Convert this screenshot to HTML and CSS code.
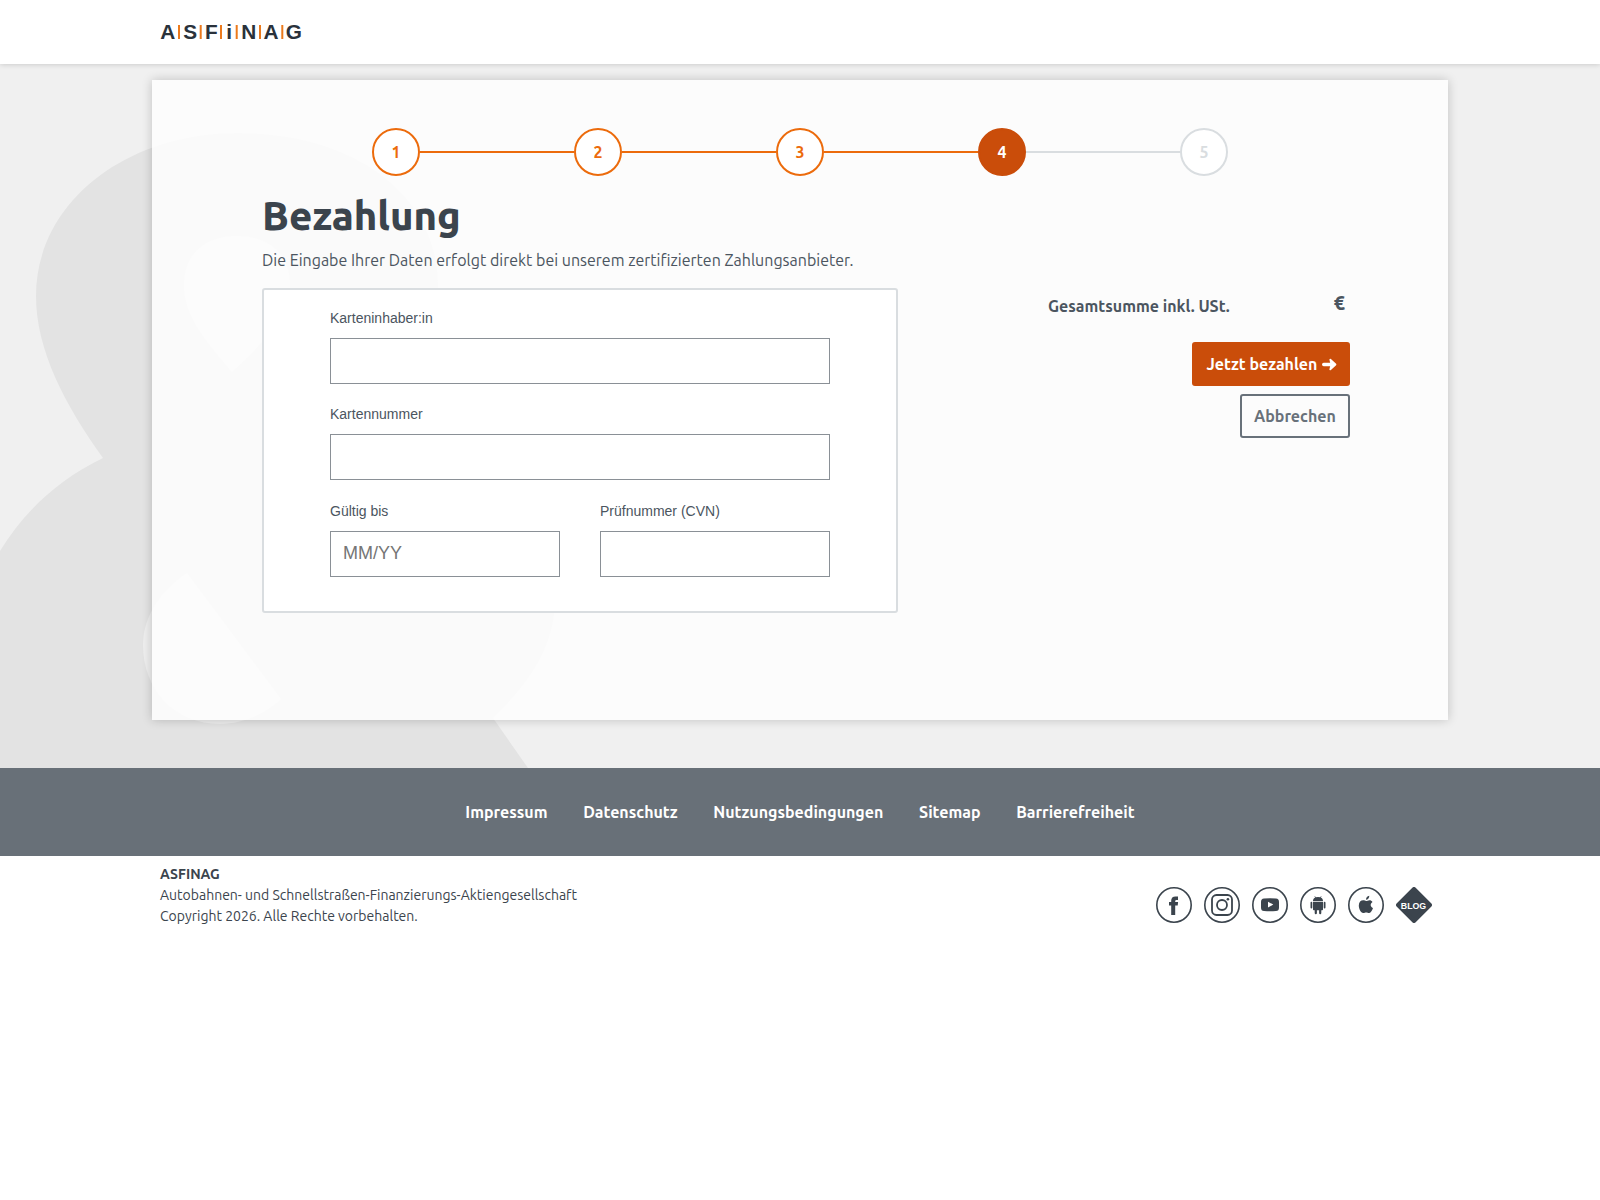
FILE: index.html
```
<!DOCTYPE html>
<html lang="de">
<head>
  <meta charset="UTF-8" />
  <meta name="viewport" content="width=device-width, initial-scale=1.0" />
  <title>ASFINAG - Bezahlung</title>
  <link rel="stylesheet" href="styles.css">
</head>
<body>
  <header class="header">
    <svg class="logo" width="144" height="24" viewBox="0 0 144 24" role="img" aria-label="ASFINAG">
      <text transform="scale(1.04 1)" y="19" x="0.300 22.400 43.400 63.700 78.100 99.600 120.800">ASFiNAG</text>
      <path d="M19 5v14M40.700 5v14M61 5v14M76.700 5v14M100 5v14M122.300 5v14" />
    </svg>
  </header>

  <div class="stage">
    <svg class="backdrop" width="620" height="704" viewBox="0 64 620 704" aria-hidden="true">
      <path class="shape" d="M103 458C65 405 36 350 36 296C36 203 125 133 238 133C355 133 438 195 438 285C438 350 405 400 355 440C480 470 555 520 555 600C555 645 530 683 493 718L528 768H0V551C22 515 55 481 103 458Z" />
      <path class="hole" d="M232 372C205 340 184 316 184 285C184 254 205 236 237 236C269 236 290 254 290 285C290 316 266 340 232 372Z" />
      <path class="hole" d="M187 573C162 590 143 615 143 645C143 690 175 724 220 724C243 724 265 714 281 699Z" />
    </svg>

    <main class="card">
      <ol class="steps">
        <li class="step done">1</li>
        <li class="step done">2</li>
        <li class="step done">3</li>
        <li class="step active">4</li>
        <li class="step">5</li>
      </ol>

      <h1>Bezahlung</h1>
      <p class="intro">Die Eingabe Ihrer Daten erfolgt direkt bei unserem zertifizierten Zahlungsanbieter.</p>

      <div class="payment">
        <form class="card-form">
          <div class="field wide">
            <label for="holder">Karteninhaber:in</label>
            <input id="holder" type="text">
          </div>
          <div class="field wide">
            <label for="number">Kartennummer</label>
            <input id="number" type="text">
          </div>
          <div class="field">
            <label for="expiry">Gültig bis</label>
            <input id="expiry" type="text" placeholder="MM/YY">
          </div>
          <div class="field">
            <label for="cvn">Prüfnummer (CVN)</label>
            <input id="cvn" type="text">
          </div>
        </form>

        <aside class="summary">
          <div class="total">
            <span class="total-label">Gesamtsumme inkl. USt.</span>
            <span class="total-value">€</span>
          </div>
          <button class="btn primary" type="button">
            <span>Jetzt bezahlen</span>
            <svg width="16" height="14" viewBox="0 0 16 14"><path class="shaft" d="M2.700 7.500H12.500" /><path class="head" d="M9.300 2.600L14.500 7.500L9.300 12.400L10.500 7.500Z" /></svg>
          </button>
          <button class="btn secondary" type="button"><span>Abbrechen</span></button>
        </aside>
      </div>
    </main>
  </div>

  <nav class="links">
    <a href="#">Impressum</a>
    <a href="#">Datenschutz</a>
    <a href="#">Nutzungsbedingungen</a>
    <a href="#">Sitemap</a>
    <a href="#">Barrierefreiheit</a>
  </nav>

  <footer class="footer">
    <div class="imprint">
      <strong>ASFINAG</strong>
      <span>Autobahnen- und Schnellstraßen-Finanzierungs-Aktiengesellschaft</span>
      <span>Copyright 2026. Alle Rechte vorbehalten.</span>
    </div>
    <div class="social">
      <a href="#" aria-label="Facebook">
        <svg viewBox="0 0 36 36"><circle class="ring" cx="18" cy="18" r="17.200" /><path d="M15.200 28V18.600H13V15h2.200v-1.300c0-2.900 1.500-4.300 4.300-4.300H22v3.600h-1.300c-1 0-1.500.4-1.500 1.300V15h2.900l-.4 3.600h-2.500V28z" /></svg>
      </a>
      <a href="#" aria-label="Instagram">
        <svg viewBox="0 0 36 36"><circle class="ring" cx="18" cy="18" r="17.200" /><rect class="line" x="8" y="8" width="20" height="20" rx="4.500" /><circle class="line" cx="18" cy="18" r="5" /><circle cx="23.900" cy="12.300" r="1.300" /></svg>
      </a>
      <a href="#" aria-label="YouTube">
        <svg viewBox="0 0 36 36"><circle class="ring" cx="18" cy="18" r="17.200" /><path fill-rule="evenodd" d="M12 11.500Q18 11 24 11.500Q27 11.500 27 15V20.500Q27 24 24 24Q18 24.500 12 24Q9 24 9 20.500V15Q9 11.500 12 11.500ZM16 14.800V20.500L21.300 17.600Z" /></svg>
      </a>
      <a href="#" aria-label="Android">
        <svg viewBox="0 0 36 36"><circle class="ring" cx="18" cy="18" r="17.200" /><path d="M13 13.900C13 12.100 14 11 15.200 10.500L14.500 9.200l.4-.2.800 1.300Q18 9.500 20.300 10.300l.8-1.300.4.2-.7 1.300C22 11 23 12.100 23 13.900zM13 14.700H23V22.500Q23 23.300 22.200 23.300H21.300V26Q21.300 27.200 20.200 27.200T19.100 26V23.300H16.900V26Q16.900 27.200 15.800 27.200T14.700 26V23.300H13.800Q13 23.300 13 22.500ZM10.500 15.700Q10.500 14.700 11.400 14.700T12.300 15.700V20.500Q12.300 21.500 11.400 21.500T10.500 20.500ZM23.700 15.700Q23.700 14.700 24.600 14.700T25.500 15.700V20.500Q25.500 21.500 24.600 21.500T23.700 20.500Z" /></svg>
      </a>
      <a href="#" aria-label="Apple">
        <svg viewBox="0 0 36 36"><circle class="ring" cx="18" cy="18" r="17.200" /><path d="M18 12.800C18 10.700 19.300 9.200 21.300 8.800C21.400 10.900 20 12.700 18 12.800ZM24.500 14.900C22 16.500 22.100 19.700 25 21C24.200 23.400 22.900 25.800 21.300 26C20.100 26.100 19.400 25.400 18.200 25.400C17 25.400 16.300 26.100 15.200 26C12.800 25.800 10.800 21.800 10.800 18.500C10.800 15.200 12.800 13.300 15.200 13.300C16.400 13.300 17.400 14 18.200 14C19 14 20 13.200 21.500 13.200C22.700 13.200 23.800 13.800 24.500 14.900Z" /></svg>
      </a>
      <a href="#" aria-label="Blog">
        <svg viewBox="0 0 36 36"><path class="diamond" d="M18 2L34 18L18 34L2 18Z" /><text class="blog" x="17.500" y="22.300">BLOG</text></svg>
      </a>
    </div>
  </footer>
</body>
</html>
```
FILE: styles.css
```
* {
  box-sizing: border-box;
}

body {
  margin: 0;
  font-family: Ubuntu, 'Noto Sans', sans-serif;
  font-size: 16px;
  color: #4b5560;
  background-color: #fff;
}

.header {
  position: relative;
  z-index: 1;
  height: 64px;
  padding: 20px 160px;
  background-color: #fff;
  box-shadow: 0 0 6px rgba(0, 0, 0, 0.2);
}

.logo {
  display: block;
}

.logo text {
  font-family: Arial, 'Liberation Sans', sans-serif;
  font-size: 20px;
  font-weight: bold;
  fill: #2a323b;
}

.logo path {
  stroke: #ec7a1c;
  stroke-width: 2;
}

.stage {
  position: relative;
  height: 704px;
  padding: 16px 152px 48px;
  background-color: #f0f0f0;
}

/* large ampersand behind the card */
.backdrop {
  position: absolute;
  left: 0;
  top: 0;
}

.shape {
  fill: #e3e3e3;
}

.hole {
  fill: #eee;
}

.card {
  position: relative;
  height: 640px;
  padding: 48px 98px 0 110px;
  background-color: rgba(254, 254, 254, 0.86);
  box-shadow: 0 0 10px rgba(0, 0, 0, 0.2);
}

.steps {
  display: flex;
  justify-content: space-between;
  width: 856px;
  margin: 0 0 0 110px;
  padding: 0;
  list-style: none;
}

.step {
  position: relative;
  width: 48px;
  height: 48px;
  border: 2px solid #d9dde0;
  border-radius: 50%;
  background-color: #fff;
  color: #d9dde0;
  font-weight: 600;
  line-height: 44px;
  text-align: center;
}

.step + .step::before {
  content: '';
  position: absolute;
  right: 46px;
  top: 21px;
  width: 154px;
  height: 2px;
  background-color: #d9dde0;
}

.step.done {
  border-color: #ec6b0c;
  color: #ec6b0c;
}

.step.active {
  border-color: #ca4d0a;
  background-color: #ca4d0a;
  color: #fff;
}

.step.done::before,
.step.active::before {
  background-color: #ec6b0c !important;
}

h1 {
  margin: 16px 0 0;
  color: #3b444d;
  font-size: 40px;
  font-weight: 800;
  line-height: 48px;
}

.intro {
  margin: 8px 0 16px;
  line-height: 24px;
}

.payment {
  display: flex;
  justify-content: space-between;
  align-items: flex-start;
}

.card-form {
  display: grid;
  grid-template-columns: 230px 230px;
  column-gap: 40px;
  align-content: start;
  width: 636px;
  height: 325px;
  padding: 18px 66px;
  border: 2px solid #d9dde0;
  border-radius: 3px;
  background-color: #fff;
}

.field {
  height: 96px;
  padding-top: 1px;
  font-family: Arial, 'Liberation Sans', sans-serif;
}

.field.wide {
  grid-column: span 2;
  padding-top: 0;
}

.field label {
  display: block;
  height: 30px;
  font-size: 14px;
  line-height: 20px;
}

.field input {
  display: block;
  width: 100%;
  height: 46px;
  padding: 0 12px 2px;
  border: 1px solid #8a9096;
  font-family: inherit;
  font-size: 18px;
}

.field input::placeholder {
  color: #757575;
}

.summary {
  display: flex;
  flex-direction: column;
  align-items: flex-end;
  width: 302px;
}

.total {
  display: flex;
  justify-content: space-between;
  width: 100%;
  height: 54px;
  padding: 6px 5px 0 0;
  font-weight: 600;
  line-height: 24px;
}

.total-value {
  margin-top: -3px;
  font-size: 20px;
  font-weight: 800;
}

.btn {
  display: flex;
  align-items: center;
  height: 44px;
  padding: 0 12px;
  border: 2px solid #68717a;
  border-radius: 3px;
  font-family: inherit;
  font-size: 16px;
  font-weight: 600;
}

.btn.primary {
  justify-content: space-between;
  width: 158px;
  padding: 0 11.5px 0 12.5px;
  border-color: #ca4d0a;
  background-color: #ca4d0a;
  color: #fff;
}

.btn.primary svg {
  flex: none;
}

.btn.primary path {
  fill: #fff;
  stroke: #fff;
  stroke-width: 1.8;
  stroke-linejoin: round;
}

.btn.primary .shaft {
  stroke-width: 3.4;
  stroke-linecap: round;
}

.btn.secondary {
  width: 110px;
  margin-top: 8px;
  background-color: transparent;
  color: #68717a;
}

.links {
  display: flex;
  justify-content: center;
  align-items: center;
  gap: 35.7px;
  height: 88px;
  background-color: #687078;
}

.links a {
  color: #fff;
  font-weight: 600;
  text-decoration: none;
}

.footer {
  display: flex;
  justify-content: space-between;
  padding: 8px 168px 0 160px;
}

.imprint {
  display: flex;
  flex-direction: column;
  color: #3b444d;
  font-size: 14px;
  line-height: 21px;
}

.imprint strong {
  font-weight: 600;
}

.social {
  display: flex;
  gap: 12px;
  padding-top: 23px;
}

.social svg {
  display: block;
  width: 36px;
  height: 36px;
  fill: #3b444d;
}

.social .ring,
.social .line {
  fill: none;
  stroke: #3b444d;
  stroke-width: 1.6;
}

.social .line {
  stroke-width: 1.8;
}

.social .diamond {
  stroke: #3b444d;
  stroke-width: 4;
  stroke-linejoin: round;
}

.blog {
  fill: #fff;
  font-family: Arial, 'Liberation Sans', sans-serif;
  font-size: 8.8px;
  font-weight: bold;
  text-anchor: middle;
}
```
